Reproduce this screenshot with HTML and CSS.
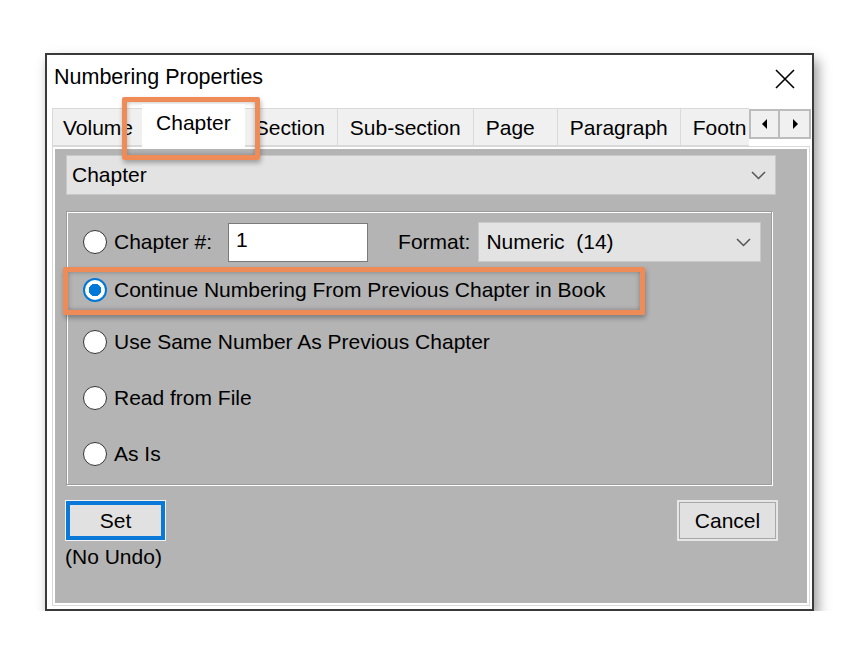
FILE: index.html
```html
<!DOCTYPE html>
<html lang="en">
  <head>
    <meta charset="UTF-8" />
    <title>Numbering Properties</title>
    <link rel="stylesheet" href="styles.css">
  </head>
  <body>
    <div class="window">
      <div class="titlebar">
        <span class="title">Numbering Properties</span>
        <svg class="close" width="20" height="20" viewBox="0 0 20 20">
          <path d="M1 1 L19 19 M19 1 L1 19" stroke="#000" stroke-width="1.6" fill="none" />
        </svg>
      </div>

      <div class="tabstrip">
        <div class="tabs">
          <div class="tab tab-volume">Volume</div>
          <div class="tab active">Chapter</div>
          <div class="tab">Section</div>
          <div class="tab">Sub-section</div>
          <div class="tab tab-page">Page</div>
          <div class="tab">Paragraph</div>
          <div class="tab">Footn</div>
        </div>
        <div class="scroller">
          <div class="scroll-btn">
            <svg width="6" height="10" viewBox="0 0 6 10"><path d="M5 0 L0 5 L5 10 Z" fill="#000" /></svg>
          </div>
          <div class="scroll-btn">
            <svg width="6" height="10" viewBox="0 0 6 10"><path d="M1 0 L6 5 L1 10 Z" fill="#000" /></svg>
          </div>
        </div>
      </div>

      <div class="panel">
        <div class="select select-level">
          <span>Chapter</span>
          <svg class="chevron" width="15" height="9" viewBox="0 0 15 9">
            <path d="M1 1 L7.5 7.5 L14 1" stroke="#555" stroke-width="1.5" fill="none" />
          </svg>
        </div>

        <div class="group">
          <div class="option tight">
            <span class="radio"></span>
            <span>Chapter #:</span>
            <div class="number-input">1</div>
            <span class="format-label">Format:</span>
            <div class="select select-format">
              <span>Numeric&nbsp; (14)</span>
              <svg class="chevron" width="15" height="9" viewBox="0 0 15 9">
                <path d="M1 1 L7.5 7.5 L14 1" stroke="#555" stroke-width="1.5" fill="none" />
              </svg>
            </div>
          </div>
          <div class="option tight">
            <span class="radio checked"></span>
            <span>Continue Numbering From Previous Chapter in Book</span>
          </div>
          <div class="option">
            <span class="radio"></span>
            <span>Use Same Number As Previous Chapter</span>
          </div>
          <div class="option">
            <span class="radio"></span>
            <span>Read from File</span>
          </div>
          <div class="option">
            <span class="radio"></span>
            <span>As Is</span>
          </div>
        </div>

        <div class="footer">
          <div class="footer-left">
            <div class="btn btn-default">Set</div>
            <div class="note">(No Undo)</div>
          </div>
          <div class="btn btn-cancel">Cancel</div>
        </div>
      </div>

      <!-- orange annotation boxes drawn over the dialog -->
      <div class="callout callout-tab"></div>
      <div class="callout callout-row"></div>
    </div>
  </body>
</html>
```

FILE: styles.css
```css
* {
  margin: 0;
  padding: 0;
  box-sizing: border-box;
}

body {
  background: #fff;
  padding: 53px 0 0 45px;
  font-family: "Liberation Sans", Arial, sans-serif;
  font-size: 21px;
  color: #000;
}

.window {
  position: relative;
  width: 769px;
  height: 558px;
  background: #fff;
  border: 2px solid #3a3a3a;
  box-shadow: 4px 7px 12px rgba(0, 0, 0, 0.4);
  padding-bottom: 3px;
}

.titlebar {
  height: 49px;
  display: flex;
  align-items: center;
  justify-content: space-between;
  padding: 0 17px 4px 7px;
}

.title {
  font-size: 21.5px;
}

.close {
  display: block;
  margin-top: 2px;
}

.tabstrip {
  display: flex;
  height: 43px;
  margin: 0 1px 0 5px;
}

.tabs {
  flex: 1;
  display: flex;
  align-items: flex-end;
  overflow: hidden;
}

.tab {
  flex-shrink: 0;
  height: 38px;
  margin-bottom: 1px;
  padding: 1px 12px 0;
  display: flex;
  align-items: center;
  background: #f0f0f0;
  border: 1px solid #d9d9d9;
  border-left: none;
  white-space: nowrap;
}

.tab-volume {
  border-left: 1px solid #d9d9d9;
  padding: 1px 10px 0;
}

.tab-page {
  min-width: 84px;
}

.tab.active {
  position: relative;
  z-index: 1;
  height: 43px;
  margin: 0 -2px;
  padding: 0 14px 5px;
  background: #fff;
  border: none;
}

.scroller {
  display: flex;
  margin-top: 5px;
  align-self: flex-start;
}

.scroll-btn {
  width: 31px;
  height: 30px;
  display: flex;
  align-items: center;
  justify-content: center;
  background: #f0f0f0;
  border: 2px solid #bcbcbc;
}

.scroll-btn + .scroll-btn {
  border-left: none;
}

.panel {
  height: 460px;
  margin: -1px 2px 0 5px;
  padding: 8px 31px 0 13px;
  background: #b4b4b4;
  border: 1px solid #d9d9d9;
  box-shadow: inset 0 0 0 2px #fff;
}

.select {
  height: 40px;
  display: flex;
  align-items: center;
  justify-content: space-between;
  background: #e3e3e3;
  border: 1px solid #c9c9c9;
  padding: 0 9px 0 5px;
}

.select-level {
  margin-right: 2px;
}

.chevron {
  display: block;
}

.group {
  height: 274px;
  margin: 16px 6px 0 0;
  padding: 6px 0 0 16px;
  border: 1px solid #9c9c9c;
  box-shadow: inset 1px 1px 0 #fff, 1px 1px 0 #fff;
}

.option {
  height: 56px;
  display: flex;
  align-items: center;
}

.option.tight {
  height: 48px;
}

.radio {
  width: 24px;
  height: 24px;
  margin-right: 7px;
  border-radius: 50%;
  background: #fff;
  border: 1.5px solid #333;
  flex-shrink: 0;
}

.radio.checked {
  border: 2px solid #0078d7;
  background: radial-gradient(circle, #0078d7 0 6px, #fff 6.5px);
}

.number-input {
  width: 140px;
  height: 39px;
  margin-left: 16px;
  padding: 4px 0 0 7px;
  background: #fff;
  border: 1px solid #7a7a7a;
}

.format-label {
  margin-left: 30px;
}

.select-format {
  width: 283px;
  margin-left: 8px;
  padding-left: 7px;
}

.footer {
  display: flex;
  justify-content: space-between;
  align-items: flex-start;
  margin-top: 16px;
}

.btn {
  display: flex;
  align-items: center;
  justify-content: center;
  background: #e1e1e1;
}

.btn-default {
  width: 99px;
  height: 39px;
  border: 4px solid #0a78d7;
  box-shadow: 0 0 0 1px #f2f2f2;
}

.note {
  margin: 5px 0 0 -1px;
}

.btn-cancel {
  width: 97px;
  height: 37px;
  margin: 1px 2px 0 0;
  border: 1px solid #a8a8a8;
  box-shadow: 0 0 0 2px #e6e6e6;
}

.callout {
  position: absolute;
  border: 5px solid #ee8b57;
  border-radius: 2px;
  box-shadow: 1px 3px 5px rgba(0, 0, 0, 0.3), inset 0 0 5px rgba(0, 0, 0, 0.3);
  pointer-events: none;
}

.callout-tab {
  left: 75px;
  top: 42px;
  width: 138px;
  height: 63px;
}

.callout-row {
  left: 16px;
  top: 212px;
  width: 582px;
  height: 48px;
}
```
